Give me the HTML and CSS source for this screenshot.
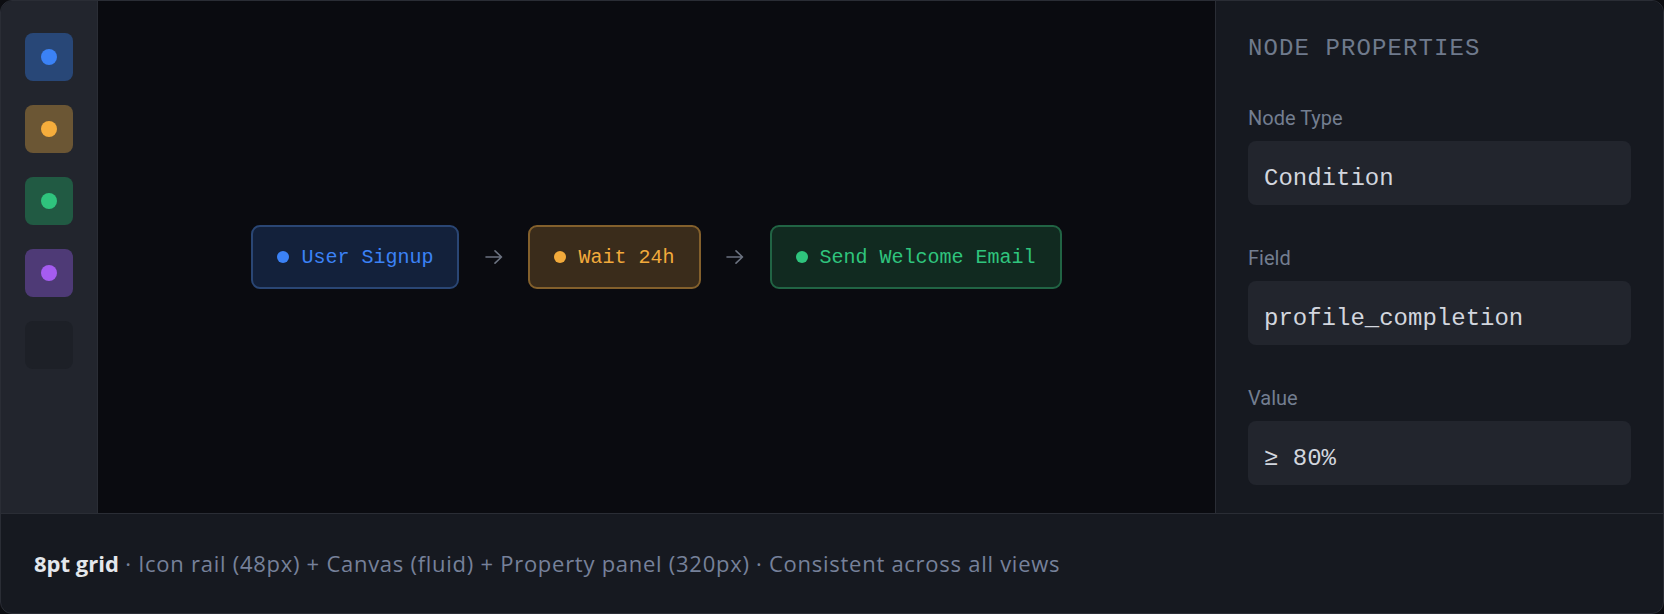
FILE: index.html
```html
<!DOCTYPE html>
<html lang="en">
<head>
<meta charset="utf-8">
<title>Workflow Editor Layout</title>
<link rel="stylesheet" href="styles.css">
</head>
<body>
<div class="frame">
  <div class="main">
    <nav class="rail">
      <div class="tool tool-blue"><span class="tool-dot"></span></div>
      <div class="tool tool-amber"><span class="tool-dot"></span></div>
      <div class="tool tool-green"><span class="tool-dot"></span></div>
      <div class="tool tool-purple"><span class="tool-dot"></span></div>
      <div class="tool tool-empty"></div>
    </nav>
    <section class="canvas">
      <div class="flow">
        <div class="node node-blue"><span class="node-dot"></span>User Signup</div>
        <span class="arrow"><svg width="18" height="16" viewBox="0 0 18 16"><path d="M1 8H16.5M10 1.8L16.5 8L10 14.2" fill="none" stroke="#6b7280" stroke-width="1.6" stroke-linecap="round" stroke-linejoin="round"/></svg></span>
        <div class="node node-amber"><span class="node-dot"></span>Wait 24h</div>
        <span class="arrow"><svg width="18" height="16" viewBox="0 0 18 16"><path d="M1 8H16.5M10 1.8L16.5 8L10 14.2" fill="none" stroke="#6b7280" stroke-width="1.6" stroke-linecap="round" stroke-linejoin="round"/></svg></span>
        <div class="node node-green"><span class="node-dot"></span>Send Welcome Email</div>
      </div>
    </section>
    <aside class="panel">
      <h2 class="panel-title">NODE PROPERTIES</h2>
      <div class="field">
        <div class="field-label">Node Type</div>
        <div class="field-input">Condition</div>
      </div>
      <div class="field">
        <div class="field-label">Field</div>
        <div class="field-input">profile_completion</div>
      </div>
      <div class="field">
        <div class="field-label">Value</div>
        <div class="field-input">≥ 80%</div>
      </div>
    </aside>
  </div>
  <footer class="footer"><strong>8pt grid</strong> · Icon rail (48px) + Canvas (fluid) + Property panel (320px) · Consistent across all views</footer>
</div>
</body>
</html>
```
FILE: styles.css
```css
* { box-sizing: border-box; }
html, body { margin: 0; padding: 0; background: #0c0d11; }
.frame {
  width: 1664px;
  height: 614px;
  border: 1px solid #2a2d35;
  border-radius: 12px;
  overflow: hidden;
  display: flex;
  flex-direction: column;
  background: #161920;
}
.main {
  height: 512px;
  display: flex;
}
.rail {
  width: 97px;
  flex: none;
  background: #22252d;
  border-right: 1px solid #2a2d35;
  padding: 32px 24px;
  display: flex;
  flex-direction: column;
  gap: 24px;
}
.tool {
  width: 48px;
  height: 48px;
  border-radius: 8px;
  display: flex;
  align-items: center;
  justify-content: center;
}
.tool-dot { width: 16px; height: 16px; border-radius: 50%; }
.tool-blue { background: #284777; }
.tool-blue .tool-dot { background: #3b82f6; }
.tool-amber { background: #6b5634; }
.tool-amber .tool-dot { background: #f5ad3c; }
.tool-green { background: #215a43; }
.tool-green .tool-dot { background: #2fc47d; }
.tool-purple { background: #4e3a76; }
.tool-purple .tool-dot { background: #a55cf0; }
.tool-empty { background: #1d2027; }
.canvas {
  flex: 1;
  background: #0a0b10;
  display: flex;
  align-items: center;
  justify-content: center;
}
.flow {
  display: flex;
  align-items: center;
  gap: 24px;
}
.node {
  display: flex;
  align-items: center;
  gap: 12px;
  padding: 17px 24px 15px;
  border: 2px solid;
  border-radius: 9px;
  font-family: "Liberation Mono", "DejaVu Sans Mono", monospace;
  font-size: 20px;
  line-height: 28px;
  white-space: nowrap;
}
.node-dot { width: 12px; height: 12px; border-radius: 50%; flex: none; margin-top: -2px; }
.node-blue { background: #13213b; border-color: #2a4674; color: #3b82f6; }
.node-blue .node-dot { background: #3b82f6; }
.node-amber { background: #3a2c1b; border-color: #83602c; color: #f2aa3b; }
.node-amber .node-dot { background: #f2aa3b; }
.node-green { background: #112a20; border-color: #216444; color: #2fc47d; }
.node-green .node-dot { background: #2fc47d; }
.arrow {
  width: 21px;
  display: flex;
  justify-content: center;
}
.arrow svg { display: block; }
.panel {
  width: 448px;
  flex: none;
  background: #161920;
  border-left: 1px solid #2a2d35;
  padding: 32px;
  display: flex;
  flex-direction: column;
  gap: 38px;
}
.panel-title {
  margin: 0;
  font-family: "Liberation Mono", "DejaVu Sans Mono", monospace;
  font-weight: 400;
  font-size: 24px;
  line-height: 32px;
  letter-spacing: 1.1px;
  color: #6f7a8c;
}
.field { display: flex; flex-direction: column; gap: 8px; }
.field-label {
  font-family: Roboto, "Liberation Sans", sans-serif;
  font-size: 20px;
  line-height: 30px;
  color: #737e90;
}
.field-input {
  height: 64px;
  background: #22252d;
  border-radius: 8px;
  padding: 22px 16px 10px;
  font-family: "Liberation Mono", "DejaVu Sans Mono", monospace;
  font-size: 24px;
  line-height: 32px;
  color: #d2d6de;
}
.footer {
  border-top: 1px solid #2a2d35;
  padding: 32px 33px;
  font-family: "Open Sans", "Noto Sans", sans-serif;
  font-size: 22px;
  line-height: 35px;
  letter-spacing: 0.73px;
  color: #76819a;
  white-space: nowrap;
}
.footer strong { color: #e4e7ec; font-weight: 700; letter-spacing: 0; }
```
